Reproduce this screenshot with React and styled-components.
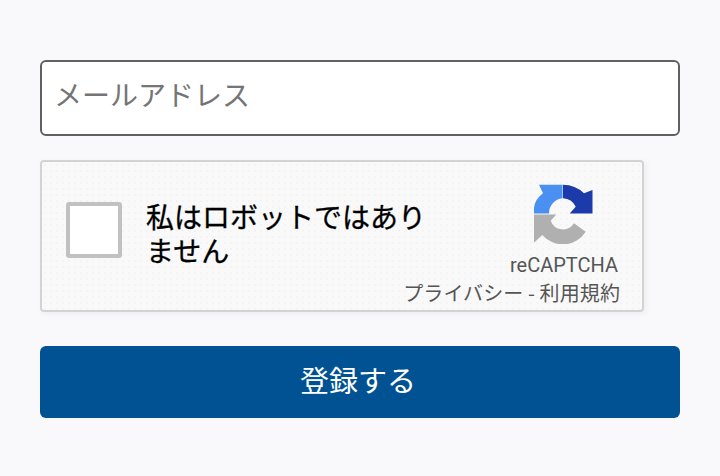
import React from 'react';
import styled, { createGlobalStyle } from 'styled-components';

const GlobalStyle = createGlobalStyle`
  html, body {
    background-color: #f9f9fc;
    margin: 0;
    padding: 0;
  }
`;

const Form = styled.form`
  display: flex;
  flex-direction: column;
  font-family: "Noto Sans CJK JP", "Noto Sans", sans-serif;
  padding: 60px 40px 58px;
  width: 640px;
`;

const EmailInput = styled.input`
  background-color: #fff;
  border: 2px solid #5f6064;
  border-radius: 6px;
  box-sizing: border-box;
  font-family: inherit;
  font-size: 28px;
  height: 76px;
  margin-bottom: 24px;
  outline: none;
  padding: 0 12px 8px;
  width: 100%;

  &::placeholder {
    color: #757575;
    opacity: 1;
  }
`;

const Captcha = styled.div`
  background-color: #f9f9f9;
  background-image: radial-gradient(#f3f3f4 0.7px, transparent 0.8px);
  background-size: 6px 6px;
  border: 2px solid #d3d3d3;
  border-radius: 4px;
  box-shadow: 2px 2px 6px rgba(0, 0, 0, 0.05);
  box-sizing: border-box;
  display: flex;
  height: 152px;
  justify-content: space-between;
  margin-bottom: 34px;
  padding: 0 22px 0 24px;
  width: 604px;
`;

const CaptchaLabel = styled.label`
  align-items: center;
  display: flex;
  flex: none;
  gap: 24px;
  padding-bottom: 12px;
`;

const CheckBox = styled.span`
  background-color: #fff;
  border: 4px solid #c1c1c1;
  border-radius: 3px;
  box-sizing: border-box;
  flex: none;
  height: 56px;
  width: 56px;
`;

const LabelText = styled.span`
  color: #000;
  font-size: 28px;
  font-weight: 400;
  line-height: 34px;
  padding-top: 5px;
  -webkit-text-stroke: 0.3px #000;
  width: 280px;
`;

const Branding = styled.div`
  align-items: flex-end;
  color: #555;
  display: flex;
  flex: none;
  flex-direction: column;
  margin-left: -30px;
  padding-top: 22px;
`;

const LogoColumn = styled.div`
  align-items: center;
  display: flex;
  flex-direction: column;
  margin-right: 2px;
`;

const Logo = styled.svg`
  display: block;
  height: 60px;
  width: 60px;
`;

const BrandName = styled.div`
  font-family: Roboto, "Liberation Sans", sans-serif;
  font-size: 20px;
  line-height: 24px;
  margin-top: 9px;
`;

const Links = styled.div`
  font-size: 20px;
  letter-spacing: 0.1px;
  line-height: 28px;
  margin-top: 2px;
  white-space: nowrap;
`;

const SubmitButton = styled.button`
  background-color: #005293;
  border: none;
  border-radius: 6px;
  color: #fff;
  font-family: inherit;
  font-size: 29px;
  height: 72px;
  padding: 0 4px 6px 0;
  width: 100%;
`;

const RecaptchaLogo = () => (
  <Logo viewBox="0 0 60 60">
    <path fill="#4a90f2" d="M5 0.7 H28.5 V14.3 A15 15 0 0 0 15 29.5 H0 A22 22 0 0 1 9 9.3 Z" />
    <path fill="#1c3aa9" d="M29 0.7 A30 30 0 0 1 50 9.3 L58.5 6 V29.5 H35.7 L41.7 22.7 A15 15 0 0 0 29 14.3 Z" />
    <path fill="#b0b0b0" d="M0 30.5 H22.3 L16.7 36.7 A13 13 0 0 0 40 39.3 L51.7 47.7 A27 27 0 0 1 8.3 51 L0 58.7 Z" />
  </Logo>
);

export default function App() {
  return (
    <>
      <GlobalStyle />
      <Form>
        <EmailInput type="email" placeholder="メールアドレス" />
        <Captcha>
          <CaptchaLabel>
            <CheckBox />
            <LabelText>私はロボットではありません</LabelText>
          </CaptchaLabel>
          <Branding>
            <LogoColumn>
              <RecaptchaLogo />
              <BrandName>reCAPTCHA</BrandName>
            </LogoColumn>
            <Links>プライバシー - 利用規約</Links>
          </Branding>
        </Captcha>
        <SubmitButton type="button">登録する</SubmitButton>
      </Form>
    </>
  );
}
